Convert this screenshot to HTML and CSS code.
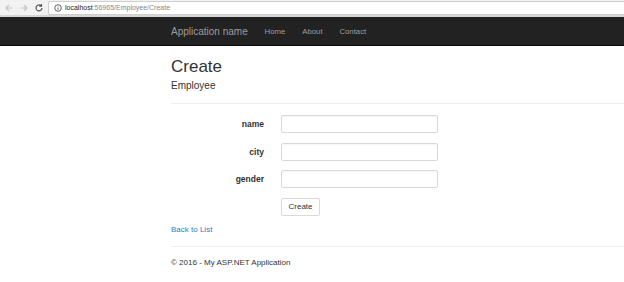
FILE: index.html
```html
<!DOCTYPE html>
<html lang="en">
  <head>
    <meta charset="UTF-8" />
    <title>Create - My ASP.NET Application</title>
    <link rel="stylesheet" href="styles.css">
  </head>
  <body>
    <div class="browser-bar">
      <div class="nav-buttons">
        <svg width="10" height="10" viewBox="0 0 10 10"><path d="M8 5H2M5 2L2 5l3 3" fill="none" stroke="#c4c4c4" stroke-width="1.2"/></svg>
        <svg width="10" height="10" viewBox="0 0 10 10"><path d="M2 5h6M5 2l3 3-3 3" fill="none" stroke="#c4c4c4" stroke-width="1.2"/></svg>
        <svg width="10" height="10" viewBox="0 0 10 10"><path d="M8 5a3 3 0 1 1-1-2.3M7.5 1v2.2H5.3" fill="none" stroke="#555" stroke-width="1.2"/></svg>
      </div>
      <div class="address">
        <svg width="8" height="8" viewBox="0 0 8 8"><circle cx="4" cy="4" r="3.3" fill="none" stroke="#555" stroke-width="0.9"/><path d="M4 3.5v2.3M4 2.2v.6" stroke="#555" stroke-width="0.9"/></svg>
        <span class="host">localhost</span><span class="path">:56965/Employee/Create</span>
      </div>
    </div>

    <div class="navbar">
      <div class="container nav-inner">
        <a class="brand" href="#">Application name</a>
        <ul class="nav-links">
          <li><a href="#">Home</a></li>
          <li><a href="#">About</a></li>
          <li><a href="#">Contact</a></li>
        </ul>
      </div>
    </div>

    <div class="container body-content">
      <h2>Create</h2>
      <h4>Employee</h4>
      <hr />

      <form class="form-horizontal">
        <label for="name">name</label>
        <input id="name" type="text" />
        <label for="city">city</label>
        <input id="city" type="text" />
        <label for="gender">gender</label>
        <input id="gender" type="text" />
        <span></span>
        <div class="form-actions"><button type="button" class="btn">Create</button></div>
      </form>

      <div class="back-link">
        <a href="#">Back to List</a>
      </div>
      <hr class="footer-rule" />
      <footer>
        <p>&copy; 2016 - My ASP.NET Application</p>
      </footer>
    </div>
  </body>
</html>
```

FILE: styles.css
```css
* {
  margin: 0;
  padding: 0;
  box-sizing: border-box;
}

body {
  font-family: "Liberation Sans", Arial, sans-serif;
  color: #333;
  background: #fff;
  overflow: hidden;
}

.browser-bar {
  height: 17px;
  display: flex;
  align-items: center;
  background: #f2f2f2;
  border-bottom: 2px solid #d6d6d6;
}

.nav-buttons {
  display: flex;
  gap: 5px;
  padding-left: 4px;
  width: 48px;
}

.address {
  flex: 1;
  height: 14px;
  display: flex;
  align-items: center;
  gap: 3px;
  padding-left: 5px;
  background: #fff;
  border: 1px solid #cfcfcf;
  border-right: none;
  border-radius: 2px 0 0 2px;
  font-size: 7px;
}

.host {
  color: #222;
}

.path {
  color: #888;
  margin-left: -3px;
}

.navbar {
  height: 29px;
  background: #222;
  border-bottom: 1px solid #080808;
}

.container {
  padding-left: 171px;
}

.nav-inner {
  display: flex;
  align-items: center;
  height: 100%;
}

.brand {
  color: #9d9d9d;
  font-size: 10px;
  text-decoration: none;
  margin-right: 8.5px;
}

.nav-links {
  display: flex;
  list-style: none;
}

.nav-links a {
  display: block;
  padding: 0 8.4px;
  color: #9d9d9d;
  font-size: 7.8px;
  text-decoration: none;
}

.body-content h2 {
  font-size: 17px;
  font-weight: normal;
  line-height: 20px;
  margin-top: 11px;
}

.body-content h4 {
  font-size: 10px;
  font-weight: normal;
  line-height: 12px;
  margin-top: 3px;
}

hr {
  border: none;
  border-top: 1px solid #eee;
  margin-top: 11px;
}

.form-horizontal {
  display: grid;
  grid-template-columns: 93px 157px;
  column-gap: 17px;
  row-gap: 9.5px;
  margin-top: 11px;
}

.form-horizontal label {
  align-self: center;
  text-align: right;
  font-size: 8.5px;
  font-weight: bold;
}

.form-horizontal input {
  height: 18px;
  border: 1px solid #d9d9d9;
  border-radius: 2px;
  box-shadow: inset 0 1px 1px rgba(0, 0, 0, 0.04);
}

.form-actions {
  display: flex;
}

.btn {
  height: 18px;
  padding: 0 6.5px;
  font-family: inherit;
  font-size: 8px;
  color: #333;
  background: #fff;
  border: 1px solid #d9d9d9;
  border-radius: 2px;
}

.back-link {
  margin-top: 9.5px;
  font-size: 8px;
  line-height: 10px;
}

.back-link a {
  color: #337ab7;
  text-decoration: none;
}

footer {
  margin-top: 11px;
  font-size: 8px;
  line-height: 10px;
}
```
